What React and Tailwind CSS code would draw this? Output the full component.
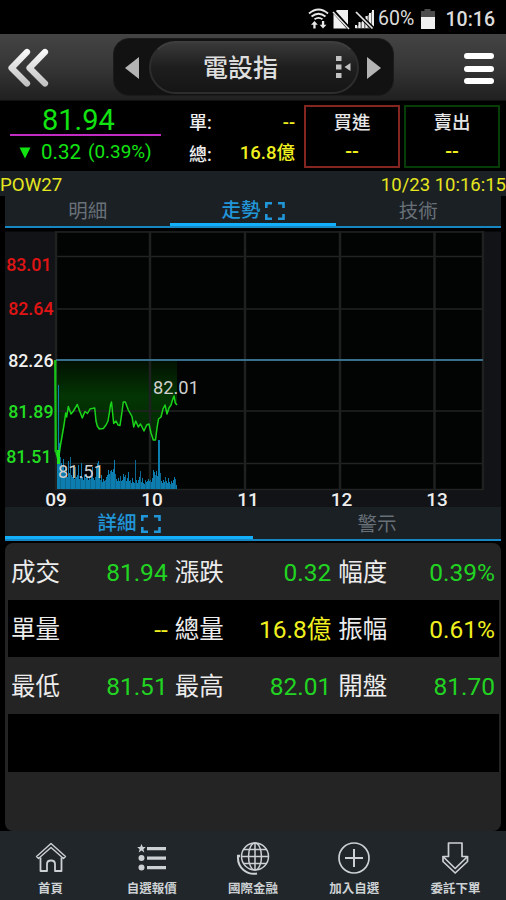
import clsx from "clsx";

const FONT = "font-['Roboto','Noto_Sans_CJK_TC',sans-serif]";

const ROWS = [
  [
    { label: "成交", value: "81.94", color: "text-[#22d422]" },
    { label: "漲跌", value: "0.32", color: "text-[#22d422]" },
    { label: "幅度", value: "0.39%", color: "text-[#22d422]" },
  ],
  [
    { label: "單量", value: "--", color: "text-[#f0f01e]" },
    { label: "總量", value: "16.8億", color: "text-[#f0f01e]" },
    { label: "振幅", value: "0.61%", color: "text-[#f0f01e]" },
  ],
  [
    { label: "最低", value: "81.51", color: "text-[#22d422]" },
    { label: "最高", value: "82.01", color: "text-[#22d422]" },
    { label: "開盤", value: "81.70", color: "text-[#22d422]" },
  ],
];

const Y_LABELS = [
  { text: "83.01", x: 51.5, y: 270.5, fill: "#e01414" },
  { text: "82.64", x: 53.5, y: 315, fill: "#e01414" },
  { text: "82.26", x: 53.5, y: 367, fill: "#f0f0f0" },
  { text: "81.89", x: 53.5, y: 418, fill: "#22dd22" },
  { text: "81.51", x: 51.5, y: 463, fill: "#22dd22" },
];

const X_LABELS = [
  { text: "09", x: 56 },
  { text: "10", x: 152 },
  { text: "11", x: 248 },
  { text: "12", x: 341.5 },
  { text: "13", x: 437 },
];

const PRICE = [
  [55, 360], [56, 452], [58.3, 461], [60.5, 445], [64, 425], [65.7, 413], [66.7, 417],
  [68.3, 406.5], [71, 414], [73.5, 411], [77.3, 404.5], [80, 412], [82.3, 418], [85, 411.5],
  [87.5, 413.5], [90, 409], [94.7, 408], [96, 421], [97.3, 426], [99.3, 429], [103.3, 428.5],
  [106, 425], [108, 421], [109.5, 412], [110.5, 405], [111.5, 402], [112.5, 412], [113.7, 423.5],
  [116, 421], [118, 425], [120, 425.5], [122, 412], [123.3, 402], [125.3, 402], [128.3, 410],
  [132, 416.5], [133.7, 427], [135.7, 421], [138.3, 427], [140.5, 424], [144, 431],
  [146.7, 425], [149, 424], [151, 433], [153.3, 440], [155.5, 440], [157, 428], [158.5, 419],
  [161, 417], [163, 409], [165, 405], [167, 414], [169, 408], [171, 405], [172.5, 400],
  [174, 396], [175.3, 403], [177, 405],
];

// one bar per 1px column, starting at 09:00
const VOLUME = [
  26, 104, 46, 32, 26, 22, 30, 18, 14, 20, 12, 28, 16, 32, 14, 12, 18, 10, 22, 12,
  14, 24, 10, 13, 26, 12, 9, 14, 11, 15, 12, 9, 13, 10, 17, 22, 11, 9, 12, 21,
  26, 28, 12, 9, 14, 7, 10, 8, 9, 12, 14, 19, 15, 18, 19, 17, 20, 29, 15, 10,
  8, 11, 8, 13, 8, 9, 15, 12, 14, 8, 11, 17, 8, 9, 6, 11, 7, 6, 29, 9,
  6, 9, 12, 18, 7, 11, 6, 5, 9, 7, 8, 10, 8, 9, 7, 11, 19, 17, 14, 18,
  13, 49, 49, 16, 8, 6, 9, 7, 12, 8, 6, 11, 7, 5, 8, 6, 9, 12, 10, 4,
];

const BASE = 489;
const linePoints = PRICE.map((p) => p.join(",")).join(" ");
const areaPoints = `55,360 ${linePoints} 177,360`;

function StatusBar() {
  return (
    <div className="h-[34px] flex items-center justify-end pr-[11px] pt-[4px] text-[#dcdcdc]">
      <svg width="70" height="24" viewBox="308 6 70 24" fill="none">
        <g stroke="#e8e8e8" strokeWidth="1.8">
          <path d="M310 12.5Q319.500 4.500 329 12.500" />
          <path d="M312.500 15.500Q319.500 10 326.500 15.500" />
          <path d="M315.500 18.300Q319.500 15.500 323.500 18.300" />
        </g>
        <path d="M315.500 20l3.300 3.800h-2.200v3.700h-2.300v-3.700h-2.300zM324 27.500l-3.300-3.700h2.200v-3.800h2.300v3.800h2.300z" fill="#e8e8e8" />
        <path d="M338 9h11v18.500h-14.500V12.500z" fill="#f2f2f2" />
        <path d="M333.500 9L350.500 28" stroke="#000" strokeWidth="3.500" />
        <path d="M334 11L350 28" stroke="#e8e8e8" strokeWidth="1.500" />
        <path d="M356 27.500h18.500V9z" fill="#777" />
        <path d="M357 27v-3M360.500 27v-6M364 27v-9M367.500 27v-12M371 27v-15M374 27V9" stroke="#eee" strokeWidth="2" />
        <path d="M356 10L374.500 28" stroke="#000" strokeWidth="4" />
        <path d="M357 11L373.500 27.500" stroke="#e8e8e8" strokeWidth="1.700" />
      </svg>
      <span className="ml-[1px] text-[19.500px] leading-none w-[38px]">60%</span>
      <svg className="ml-[4px]" width="16" height="22" viewBox="0 0 16 22">
        <path d="M4.500 1h6v2H15v6H1V3h3.500z" fill="#4c4c4c" />
        <path d="M1 9h14v12H1z" fill="#f0f0f0" />
      </svg>
      <span className="ml-[9px] pt-[1px] text-[19.500px] leading-none font-medium w-[50px] text-right">10:16</span>
    </div>
  );
}

function Header() {
  return (
    <header className="h-[67px] flex items-center bg-linear-to-b from-[#444] via-[#363636] to-[#202020] border-b border-[#111]">
      <svg className="ml-[7px] mt-[2px]" width="43" height="42" viewBox="0 0 43 42" fill="none" stroke="url(#chev)" strokeWidth="6.200" strokeLinecap="round" strokeLinejoin="round">
        <defs>
          <linearGradient id="chev" x1="0" y1="0" x2="0" y2="42" gradientUnits="userSpaceOnUse">
            <stop offset="0" stopColor="#fff" />
            <stop offset="1" stopColor="#bbb" />
          </linearGradient>
        </defs>
        <path d="M20 5L4.500 21L20 36.500M38 5L22.500 21L38 36.500" />
      </svg>
      <div className="ml-[63px] w-[281px] h-[58px] rounded-[16px] bg-[#121212] border border-[#1b1b1b] flex items-center">
        <svg className="ml-[10px] mt-[2px]" width="16" height="24" viewBox="0 0 16 24">
          <path d="M15 1v22L1 12z" fill="#b4b4b4" />
        </svg>
        <div className="ml-[9px] w-[210px] h-[53px] rounded-full border-2 border-[#2d2d2d] border-t-[#3e3e3e] bg-linear-to-b from-[#393939] via-[#1e1e1e] to-[#151515] flex items-center">
          <span className="ml-[52px] pt-[3px] text-[25px] leading-none font-medium text-[#dedede]">電設指</span>
          <svg className="ml-[57px]" width="18" height="22" viewBox="0 0 18 22" fill="#c2c2c2">
            <path d="M1 0h5.500v5H1zM1 8.500h5.500v5H1zM1 17h5.500v5H1zM15.500 7v8l-6-4z" />
          </svg>
        </div>
        <svg className="ml-[7px] mt-[2px]" width="16" height="24" viewBox="0 0 16 24">
          <path d="M1 1v22L15 12z" fill="#b4b4b4" />
        </svg>
      </div>
      <div className="ml-[70px] mt-[3px] w-[30px] h-[31px] flex flex-col justify-between">
        {[0, 1, 2].map((i) => (
          <div key={i} className="h-[6px] rounded-full bg-white" />
        ))}
      </div>
    </header>
  );
}

function Quote() {
  return (
    <section className="h-[70px] flex">
      <div className="ml-[10px] w-[151px] text-[#12e412]">
        <div className="h-[35px] border-b-[2px] border-[#c32cc3] pl-[32px] text-[29px] leading-[38px] whitespace-nowrap">81.94</div>
        <div className="h-[33px] flex items-center pl-[9px]">
          <svg width="12" height="12" viewBox="0 0 12 12">
            <path d="M0.500 0.500h11L6 11.500z" fill="#12e412" />
          </svg>
          <span className="ml-[10px] text-[20.500px] leading-none">0.32</span>
          <span className="ml-[7px] text-[18.900px] leading-none">(0.39%)</span>
        </div>
      </div>
      <div className="ml-[28px] w-[106px] text-[18px] text-[#eee]">
        <div className="h-[37px] flex items-center justify-between pt-[5px]">
          <span className="font-medium">單:</span>
          <span className="text-[#f0f01e] text-[18px] font-medium">--</span>
        </div>
        <div className="h-[31px] flex items-center justify-between pt-[1px]">
          <span className="font-medium">總:</span>
          <span className="text-[#f0f01e] text-[18.500px] font-medium">16.8億</span>
        </div>
      </div>
      <div className="ml-[9px] mt-[4px] w-[96px] h-[63px] border-2 border-[#84251f] text-center text-[18.500px] font-medium text-[#e6e6e6]">
        <div className="h-[30px] leading-[33px]">買進</div>
        <div className="text-[20px] leading-[28px] text-[#f0f01e]">--</div>
      </div>
      <div className="ml-[4px] mt-[4px] w-[96px] h-[63px] border-2 border-[#073d09] text-center text-[18.500px] font-medium text-[#e6e6e6]">
        <div className="h-[30px] leading-[33px]">賣出</div>
        <div className="text-[20px] leading-[28px] text-[#f0f01e]">--</div>
      </div>
    </section>
  );
}

function ExpandIcon() {
  return (
    <svg className="ml-[4px]" width="20" height="18" viewBox="0 0 20 18" fill="none" stroke="#2196d8" strokeWidth="2.600">
      <path d="M1.300 6V1.300H7M13 1.300h5.500V6M18.500 12v4.700H13M7 16.700H1.300V12" />
    </svg>
  );
}

function Tab({ label, active, className }) {
  return (
    <div
      className={clsx(
        "flex items-center justify-center text-[19.500px] leading-none",
        active ? "text-[#2196d8] font-medium" : "text-[#687078]",
        className
      )}
    >
      {label}
      {active && <ExpandIcon />}
    </div>
  );
}

function Chart() {
  return (
    <svg className="block mx-[5px] bg-[#111316] overflow-visible" width="496" height="278" viewBox="5 229 496 278">
      <defs>
        <linearGradient id="area" x1="0" y1="360" x2="0" y2="440" gradientUnits="userSpaceOnUse">
          <stop offset="0" stopColor="#021002" />
          <stop offset="0.450" stopColor="#033503" />
          <stop offset="1" stopColor="#022402" />
        </linearGradient>
      </defs>
      <path d="M5 229h496v2.500H5z" fill="#000" />
      <path d="M56 232h427v257H56z" fill="#020303" />
      <polygon points={areaPoints} fill="url(#area)" />
      <path d="M56 256.500H483M56 309H483M56 411H483M56 463.500H483M56 232H483M56 489.500H483" stroke="#222323" strokeWidth="1.600" />
      <path d="M56 231V490M150 231V490M245 231V490M340 231V490M434.500 231V490M483 231V490" stroke="#1f2020" strokeWidth="2.500" />
      {VOLUME.map((v, i) => (
        <rect key={i} x={57 + i} y={BASE - v} width="1" height={v} fill={i % 5 === 3 ? "#0c6791" : "#0d7cae"} />
      ))}
      <path d="M56 360H483" stroke="#386f8c" strokeWidth="1.800" />
      <polyline points={linePoints} fill="none" stroke="#1ad41a" strokeWidth="1.500" strokeLinejoin="round" />
      <path d="M55.500 360V452" stroke="#16c416" strokeWidth="2" />
      <path d="M58.500 450V464" stroke="#1ee01e" strokeWidth="3" />
      <g fontSize="17.800" fontWeight="500">
        {Y_LABELS.map((l) => (
          <text key={l.text} x={l.x} y={l.y} fill={l.fill} textAnchor="end">{l.text}</text>
        ))}
        <text x="153" y="394" fill="#cfcfcf" fontSize="18.300" fontWeight="400">82.01</text>
        <text x="58" y="478" fill="#cfcfcf" fontSize="18.300" fontWeight="400">81.51</text>
      </g>
      <g fontSize="19" fontWeight="500" fill="#eee" textAnchor="middle">
        {X_LABELS.map((l) => (
          <text key={l.text} x={l.x} y="506">{l.text}</text>
        ))}
      </g>
    </svg>
  );
}

function HomeIcon() {
  return (
    <svg width="32" height="34" viewBox="0 0 32 34" fill="none" stroke="#cdd1d4" strokeWidth="1.800" strokeLinejoin="round">
      <path d="M1.500 15.500L16 2.500L30.500 15.500L28.500 17.500L16 6.500L3.500 17.500z" strokeWidth="1.400" />
      <path d="M5.500 16.500V30H12V23Q12 19.500 16 19.500T20 23V30H26.500V16.500" />
    </svg>
  );
}

function ListIcon() {
  return (
    <svg width="32" height="34" viewBox="0 0 32 34" fill="#cdd1d4">
      <path d="M5.500 3l1.300 3h3l-2.400 2.200.9 3.300-2.800-1.900-2.800 1.900.9-3.300L1.200 6h3z" />
      <circle cx="5.500" cy="17" r="3" />
      <circle cx="5.500" cy="26.500" r="3" />
      <path d="M11 6h19v3.200H11zM11 15.500h19v3.200H11zM11 25h19v3.200H11z" />
    </svg>
  );
}

function GlobeIcon() {
  return (
    <svg width="36" height="36" viewBox="0 0 36 36" fill="none" stroke="#cdd1d4" strokeWidth="1.500">
      <circle cx="20" cy="15.500" r="13.500" />
      <ellipse cx="20" cy="15.500" rx="6.500" ry="13.500" />
      <path d="M20 2v27M6.500 15.500h27M8.500 8.500h23M8.500 22.500h23" />
      <path d="M3 15.500Q2.500 24 8.500 29T22 32.500" strokeWidth="2" />
      <path d="M2 15h3" strokeWidth="2.500" />
    </svg>
  );
}

function PlusIcon() {
  return (
    <svg width="34" height="34" viewBox="0 0 34 34" fill="none" stroke="#cdd1d4" strokeWidth="1.700">
      <circle cx="17" cy="17" r="15" />
      <path d="M17 8v18M8 17h18" strokeWidth="2" />
    </svg>
  );
}

function OrderIcon() {
  return (
    <svg width="30" height="34" viewBox="0 0 30 34" fill="none" stroke="#cdd1d4" strokeWidth="1.700" strokeLinejoin="round">
      <path d="M8.500 2H22V15.500H27.500L15.200 27.500L3 15.500H8.500z" />
      <path d="M3 15.500V20.500L15.200 32L27.500 20.500V15.500" />
    </svg>
  );
}

const NAV = [
  { label: "首頁", icon: HomeIcon },
  { label: "自選報價", icon: ListIcon },
  { label: "國際金融", icon: GlobeIcon },
  { label: "加入自選", icon: PlusIcon },
  { label: "委託下單", icon: OrderIcon },
];

export default function App() {
  return (
    <div className={clsx("w-[506px] h-[900px] bg-black overflow-hidden flex flex-col", FONT)}>
      <StatusBar />
      <Header />
      <Quote />

      <div className="h-[25px] bg-[#1b2025] flex justify-between text-[18.700px] leading-[28px] text-[#e6e61e] whitespace-nowrap">
        <span>POW27</span>
        <span className="text-[18.500px]">10/23 10:16:15</span>
      </div>

      <div className="mx-[5px] h-[32px] bg-[#1b2025] grid grid-cols-3 border-b-2 border-[#1787c4]">
        <Tab label="明細" className="pt-[1px]" />
        <Tab label="走勢" active className="border-b-[3px] border-[#12b0fa] pt-[3px]" />
        <Tab label="技術" className="pt-[1px]" />
      </div>

      <div className="h-[279px] pt-[1px]">
        <Chart />
      </div>

      <div className="mx-[5px] h-[34px] bg-[#1b2025] grid grid-cols-2 border-b-2 border-[#1787c4]">
        <Tab label="詳細" active className="border-b-[3px] border-[#12b0fa] pt-[4px]" />
        <Tab label="警示" className="pt-[3px]" />
      </div>

      {/* detail table */}
      <div className="mx-[5px] mt-[2px] h-[288px] rounded-[8px] bg-[#242424] pl-[3px] pr-[2px]">
        {ROWS.map((row, i) => (
          <div key={i} className={clsx("h-[57px] flex gap-[7px] pl-[3px] pr-[4px] pt-[3px]", i % 2 === 1 && "bg-black")}>
            {row.map((cell) => (
              <div key={cell.label} className="w-[157px] flex items-center justify-between leading-none whitespace-nowrap">
                <span className="text-[24.500px] pt-[1px] text-[#ececec]">{cell.label}</span>
                <span className={clsx("text-[24.500px]", cell.color)}>{cell.value}</span>
              </div>
            ))}
          </div>
        ))}
        <div className="h-[58px] bg-black" />
      </div>

      <nav className="h-[69px] bg-[#20262a] grid grid-cols-5">
        {NAV.map(({ label, icon: Icon }) => (
          <div key={label} className="flex flex-col items-center pt-[10px]">
            <div className="h-[37px]">
              <Icon />
            </div>
            <span className="text-[12.500px] leading-[22px] font-bold text-[#cdd1d4]">{label}</span>
          </div>
        ))}
      </nav>
    </div>
  );
}
